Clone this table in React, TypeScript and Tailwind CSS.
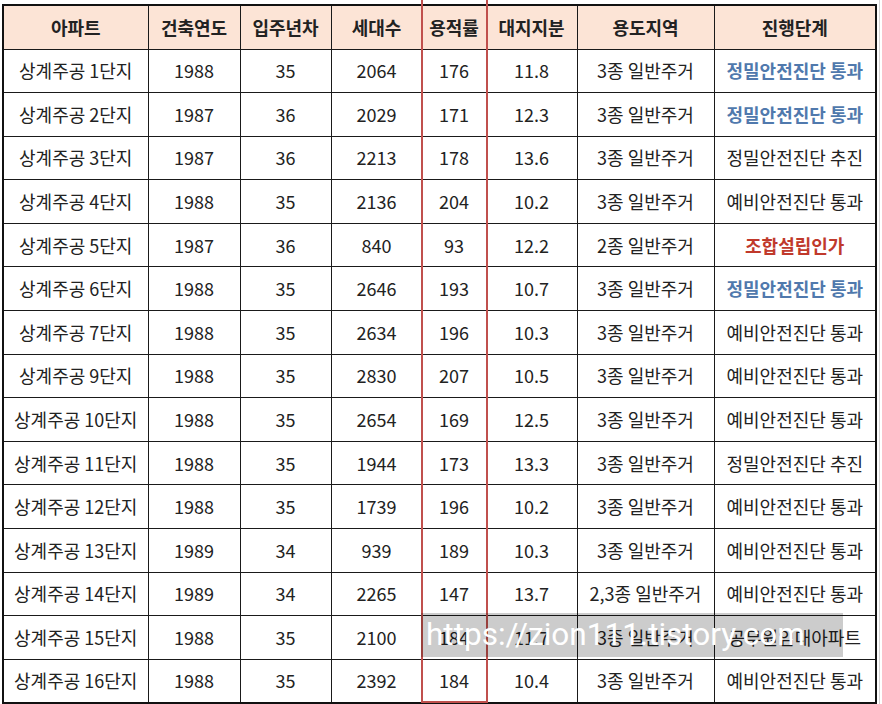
import React from 'react';

type Row = {
  name: string;
  year: string;
  age: string;
  units: string;
  far: string;
  land: string;
  zone: string;
  stage: string;
  tone?: 'blue' | 'red';
};

const rows: Row[] = [
  { name: '상계주공 1단지', year: '1988', age: '35', units: '2064', far: '176', land: '11.8', zone: '3종 일반주거', stage: '정밀안전진단 통과', tone: 'blue' },
  { name: '상계주공 2단지', year: '1987', age: '36', units: '2029', far: '171', land: '12.3', zone: '3종 일반주거', stage: '정밀안전진단 통과', tone: 'blue' },
  { name: '상계주공 3단지', year: '1987', age: '36', units: '2213', far: '178', land: '13.6', zone: '3종 일반주거', stage: '정밀안전진단 추진' },
  { name: '상계주공 4단지', year: '1988', age: '35', units: '2136', far: '204', land: '10.2', zone: '3종 일반주거', stage: '예비안전진단 통과' },
  { name: '상계주공 5단지', year: '1987', age: '36', units: '840', far: '93', land: '12.2', zone: '2종 일반주거', stage: '조합설립인가', tone: 'red' },
  { name: '상계주공 6단지', year: '1988', age: '35', units: '2646', far: '193', land: '10.7', zone: '3종 일반주거', stage: '정밀안전진단 통과', tone: 'blue' },
  { name: '상계주공 7단지', year: '1988', age: '35', units: '2634', far: '196', land: '10.3', zone: '3종 일반주거', stage: '예비안전진단 통과' },
  { name: '상계주공 9단지', year: '1988', age: '35', units: '2830', far: '207', land: '10.5', zone: '3종 일반주거', stage: '예비안전진단 통과' },
  { name: '상계주공 10단지', year: '1988', age: '35', units: '2654', far: '169', land: '12.5', zone: '3종 일반주거', stage: '예비안전진단 통과' },
  { name: '상계주공 11단지', year: '1988', age: '35', units: '1944', far: '173', land: '13.3', zone: '3종 일반주거', stage: '정밀안전진단 추진' },
  { name: '상계주공 12단지', year: '1988', age: '35', units: '1739', far: '196', land: '10.2', zone: '3종 일반주거', stage: '예비안전진단 통과' },
  { name: '상계주공 13단지', year: '1989', age: '34', units: '939', far: '189', land: '10.3', zone: '3종 일반주거', stage: '예비안전진단 통과' },
  { name: '상계주공 14단지', year: '1989', age: '34', units: '2265', far: '147', land: '13.7', zone: '2,3종 일반주거', stage: '예비안전진단 통과' },
  { name: '상계주공 15단지', year: '1988', age: '35', units: '2100', far: '184', land: '11.7', zone: '3종 일반주거', stage: '공무원임대아파트' },
  { name: '상계주공 16단지', year: '1988', age: '35', units: '2392', far: '184', land: '10.4', zone: '3종 일반주거', stage: '예비안전진단 통과' },
];

const headers = ['아파트', '건축연도', '입주년차', '세대수', '용적률', '대지지분', '용도지역', '진행단계'];
const widths = ['w-[145px]', 'w-[92px]', 'w-[91px]', 'w-[91px]', 'w-[64px]', 'w-[91px]', 'w-[137px]', 'w-[162px]'];

const cell = 'border border-[#1a1a1a] text-center align-middle p-0 whitespace-nowrap';

export default function App() {
  return (
    <div
      className="relative w-[882px] h-[704px] overflow-hidden bg-white text-[18px] text-[#222]"
      style={{ fontFamily: '"Noto Sans CJK KR", "Noto Sans", sans-serif' }}
    >
      {/* faint sheet gridline past the table */}
      <div className="absolute left-[879px] top-0 h-full w-px bg-[#d4d4d4]" />

      <table className="ml-[2px] mt-[4px] w-[875px] table-fixed border-collapse border-2 border-[#111]">
        <colgroup>
          {widths.map((w, i) => (
            <col key={i} className={w} />
          ))}
        </colgroup>
        <thead>
          <tr className="h-[44px] bg-[#fce4d6]">
            {headers.map((h) => (
              <th key={h} className={`${cell} font-bold text-[#222]`}>
                {h}
              </th>
            ))}
          </tr>
        </thead>
        <tbody>
          {rows.map((r) => (
            <tr key={r.name} className="h-[43.6px]">
              <td className={cell}>{r.name}</td>
              <td className={cell}>{r.year}</td>
              <td className={cell}>{r.age}</td>
              <td className={cell}>{r.units}</td>
              <td className={cell}>{r.far}</td>
              <td className={cell}>{r.land}</td>
              <td className={cell}>{r.zone}</td>
              <td
                className={`${cell} ${
                  r.tone === 'blue'
                    ? 'text-[#5079ad] font-semibold'
                    : r.tone === 'red'
                    ? 'text-[#c0392b] font-bold'
                    : ''
                }`}
              >
                {r.stage}
              </td>
            </tr>
          ))}
        </tbody>
      </table>

      {/* red highlight around 용적률 */}
      <div className="absolute left-[421px] top-[-4px] w-[67px] h-[707px] border-2 border-[#c0504d]" />

      {/* watermark */}
      <div
        className="absolute left-[421px] top-[613px] w-[422px] h-[44px] bg-black/20 flex items-center pl-[5px] text-white text-[31.5px] leading-none"
        style={{ fontFamily: 'Roboto, "Open Sans", sans-serif' }}
      >
        https://zion111.tistory.com
      </div>
    </div>
  );
}
